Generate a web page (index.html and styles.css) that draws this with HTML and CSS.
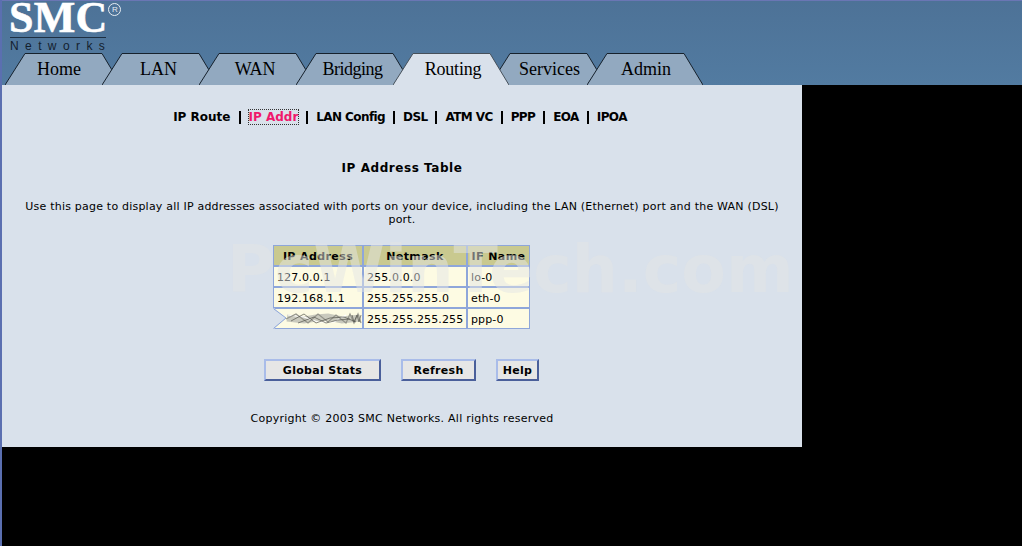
FILE: index.html
```html
<!DOCTYPE html>
<html lang="en">
<head>
<meta charset="utf-8">
<title>IP Address Table</title>
<link rel="stylesheet" href="styles.css">
</head>
<body>
<header class="header">
  <div class="logo">
    <div class="logo-top"><span class="logo-smc">SMC</span><span class="logo-reg">R</span></div>
    <div class="logo-net">Networks</div>
  </div>
  <nav class="tabs">
    <a class="tab tab-home"><svg class="tab-shape" viewBox="0 0 116 32"><polygon points="0,32 20,0.5 97,0.5 116,32"/><polyline points="0,32 20,0.5 97,0.5 116,32"/></svg><span class="tab-label">Home</span></a>
    <a class="tab tab-lan"><svg class="tab-shape" viewBox="0 0 116 32"><polygon points="0,32 20,0.5 97,0.5 116,32"/><polyline points="0,32 20,0.5 97,0.5 116,32"/></svg><span class="tab-label">LAN</span></a>
    <a class="tab tab-wan"><svg class="tab-shape" viewBox="0 0 116 32"><polygon points="0,32 20,0.5 97,0.5 116,32"/><polyline points="0,32 20,0.5 97,0.5 116,32"/></svg><span class="tab-label">WAN</span></a>
    <a class="tab tab-bridging"><svg class="tab-shape" viewBox="0 0 116 32"><polygon points="0,32 20,0.5 97,0.5 116,32"/><polyline points="0,32 20,0.5 97,0.5 116,32"/></svg><span class="tab-label">Bridging</span></a>
    <a class="tab tab-routing active"><svg class="tab-shape" viewBox="0 0 116 32"><polygon points="0,32 20,0.5 97,0.5 116,32"/><polyline points="0,32 20,0.5 97,0.5 116,32"/></svg><span class="tab-label">Routing</span></a>
    <a class="tab tab-services"><svg class="tab-shape" viewBox="0 0 116 32"><polygon points="0,32 20,0.5 97,0.5 116,32"/><polyline points="0,32 20,0.5 97,0.5 116,32"/></svg><span class="tab-label">Services</span></a>
    <a class="tab tab-admin"><svg class="tab-shape" viewBox="0 0 116 32"><polygon points="0,32 20,0.5 97,0.5 116,32"/><polyline points="0,32 20,0.5 97,0.5 116,32"/></svg><span class="tab-label">Admin</span></a>
  </nav>
</header>
<main class="panel">
  <nav class="subnav">
    <a class="sublink sublink-loose">IP Route</a><i class="sep"></i>
    <a class="sublink sublink-loose current">IP Addr</a><i class="sep"></i>
    <a class="sublink">LAN Config</a><i class="sep"></i>
    <a class="sublink">DSL</a><i class="sep"></i>
    <a class="sublink">ATM VC</a><i class="sep"></i>
    <a class="sublink">PPP</a><i class="sep"></i>
    <a class="sublink">EOA</a><i class="sep"></i>
    <a class="sublink">IPOA</a>
  </nav>
  <h1 class="title">IP Address Table</h1>
  <p class="intro">Use this page to display all IP addresses associated with ports on your device, including the LAN (Ethernet) port and the WAN (DSL) port.</p>
  <table class="iptable">
    <thead>
      <tr><th class="col-ip">IP Address</th><th class="col-mask">Netmask</th><th class="col-if">IF Name</th></tr>
    </thead>
    <tbody>
      <tr><td>127.0.0.1</td><td>255.0.0.0</td><td>lo-0</td></tr>
      <tr><td>192.168.1.1</td><td>255.255.255.0</td><td>eth-0</td></tr>
      <tr><td class="masked"><svg class="smudge" viewBox="0 0 89 19" preserveAspectRatio="none">
        <polygon class="smudge-notch" points="0,-1 12,9 0,20"/>
        <polyline class="smudge-edge" points="0,0 12,9 0,19"/>
        <g class="smudge-blur">
          <path class="smudge-b" d="M13 9 L30 11 L42 9 L54 8 L68 11 L86 9"/>
          <path class="smudge-w" d="M14 6 L30 8 L44 13 L60 13 L72 6"/>
          <path class="smudge-a" d="M12 10 L22 5 L34 14 L44 5 L54 13 L62 6 L72 14 L76 5 L80 14 L84 5 L87 14"/>
          <path class="smudge-c" d="M17 12 L30 5 L42 14 L56 9 L70 8 L82 13"/>
          <path class="smudge-c" d="M24 14 L40 8 L52 14 L64 11 L76 10"/>
          <path class="smudge-c" d="M78 6 L80 13 L83 6 L85 13 L87 6"/>
        </g>
      </svg></td><td>255.255.255.255</td><td>ppp-0</td></tr>
    </tbody>
  </table>
  <div class="actions">
    <button class="btn btn-stats">Global Stats</button>
    <button class="btn btn-refresh">Refresh</button>
    <button class="btn btn-help">Help</button>
  </div>
  <p class="copyright">Copyright © 2003 SMC Networks. All rights reserved</p>
  <div class="watermark">PcWinTech.com</div>
</main>
</body>
</html>
```

FILE: styles.css
```css
html, body {
  margin: 0;
  padding: 0;
}
body {
  background: #000;
  min-height: 546px;
  box-sizing: border-box;
  border-left: 2px solid #5b6fb0;
  font-family: "DejaVu Sans", Verdana, sans-serif;
  font-size: 11px;
  color: #000;
  overflow: hidden;
}
.header {
  box-sizing: border-box;
  height: 85px;
  border-top: 1px solid #6a76b4;
  background: linear-gradient(180deg, #4d7297 0%, #527ba1 100%);
  display: flex;
  flex-direction: column;
}
.logo {
  box-sizing: border-box;
  height: 52px;
  width: 125px;
  padding-left: 8px;
  display: flex;
  flex-direction: column;
}
.logo-top {
  display: flex;
  height: 36px;
  border-bottom: 1px solid #1d2f42;
  width: 96px;
}
.logo-smc {
  font-family: "Liberation Serif", "Times New Roman", serif;
  font-weight: bold;
  font-size: 44px;
  line-height: 36px;
  color: #fff;
  letter-spacing: 0.2px;
  -webkit-text-stroke: 0.6px #fff;
  margin-top: -1px;
  margin-left: -1px;
}
.logo-reg {
  flex: none;
  box-sizing: border-box;
  width: 13px;
  height: 13px;
  margin: 2px 0 0 1px;
  border: 1px solid #e6edf3;
  border-radius: 50%;
  color: #e6edf3;
  font-family: "Liberation Sans", Arial, sans-serif;
  font-size: 8px;
  line-height: 11px;
  text-align: center;
}
.logo-net {
  margin-top: 1px;
  font-family: "Liberation Sans", Arial, sans-serif;
  font-size: 12px;
  line-height: 14px;
  letter-spacing: 6.4px;
  color: #13202e;
  white-space: nowrap;
}
.tabs {
  display: flex;
  height: 32px;
  padding-left: 3px;
}
.tab {
  position: relative;
  flex: none;
  box-sizing: border-box;
  width: 116px;
  height: 32px;
  margin-right: -19px;
  display: flex;
  align-items: center;
  justify-content: center;
  font-family: "Liberation Serif", "Times New Roman", serif;
  font-size: 18px;
  color: #000;
}
.tab-shape {
  position: absolute;
  left: 0;
  top: 0;
  width: 116px;
  height: 32px;
  display: block;
}
.tab-shape polygon {
  fill: #92a9c0;
}
.tab-shape polyline {
  fill: none;
  stroke: #16212c;
  stroke-width: 1;
}
.tab.active {
  z-index: 2;
}
.tab.active polygon {
  fill: #d9e1eb;
}
.tab.active polyline {
  stroke: #46505a;
}
.tab-label {
  position: relative;
}
.tab-home { padding-right: 8px; }
.tab-lan { padding-right: 3px; }
.tab-wan { padding-right: 4px; letter-spacing: -0.2px; }
.tab-bridging { padding-right: 3px; letter-spacing: -0.5px; }
.tab-routing { padding-left: 4px; letter-spacing: -0.2px; }
.tab-services { padding-left: 3px; }
.tab-admin { padding-left: 2px; }

.panel {
  position: relative;
  box-sizing: border-box;
  width: 800px;
  height: 362px;
  background: #d9e1eb;
  padding-top: 25px;
  overflow: hidden;
}
.subnav {
  display: flex;
  justify-content: center;
  align-items: center;
  height: 14px;
  padding-right: 4px;
  font-weight: bold;
  font-size: 12px;
  white-space: nowrap;
}
.sublink {
  line-height: 14px;
  color: #000;
  letter-spacing: -0.6px;
}
.sublink-loose {
  letter-spacing: 0;
}
.sublink.current {
  color: #f0186c;
  outline: 1px dotted #333;
}
.sep {
  flex: none;
  width: 2px;
  height: 13px;
  margin: 0 8px;
  background: #000;
}
.title {
  margin: 37px 0 0;
  font-size: 12px;
  font-weight: bold;
  line-height: 14px;
  letter-spacing: 0.55px;
  text-align: center;
}
.intro {
  margin: 25px auto 0;
  width: 770px;
  font-size: 11px;
  line-height: 13px;
  letter-spacing: 0.21px;
  text-align: center;
}
.iptable {
  margin: 19px 0 0 271px;
  border-collapse: separate;
  border-spacing: 0;
  width: 257px;
  table-layout: fixed;
  font-size: 11px;
}
.iptable th,
.iptable td {
  box-sizing: border-box;
  height: 21px;
  padding: 2px 3px 0;
  border: 1px solid #8ea6da;
  background: #fdfbe3;
  white-space: nowrap;
  line-height: 13px;
  letter-spacing: 0.12px;
}
.iptable th {
  background: #c9c98f;
  font-weight: bold;
  letter-spacing: 0.4px;
  text-align: center;
}
.col-ip { width: 90px; }
.col-mask { width: 104px; }
.col-if { width: 63px; }
.iptable td.masked {
  padding: 0;
  border-left-color: #d9e1eb;
}
.smudge {
  display: block;
  width: 89px;
  height: 19px;
  overflow: visible;
}
.smudge-notch { fill: #d9e1eb; }
.smudge-edge { fill: none; stroke: #8ea6da; stroke-width: 1; }
.smudge-blur { filter: blur(0.35px); }
.smudge-a,
.smudge-b,
.smudge-c,
.smudge-w {
  fill: none;
}
.smudge-a { stroke: #94948a; stroke-width: 1.2; }
.smudge-b { stroke: #c9c9bd; stroke-width: 7; }
.smudge-c { stroke: #55554d; stroke-width: 0.7; }
.smudge-w { stroke: #ffffff; stroke-width: 1.2; }
.actions {
  display: flex;
  margin: 30px 0 0 262px;
  gap: 20px;
}
.btn {
  box-sizing: border-box;
  height: 22px;
  padding: 0;
  border: 2px solid;
  border-color: #a9bce9 #4a5f9a #4a5f9a #a9bce9;
  background: #e6e6e6;
  color: #000;
  font-family: "DejaVu Sans", Verdana, sans-serif;
  font-weight: bold;
  font-size: 11px;
  letter-spacing: 0.3px;
}
.btn-stats { width: 117px; }
.btn-refresh { width: 75px; }
.btn-help { width: 43px; }
.copyright {
  margin: 31px 0 0;
  text-align: center;
  font-size: 11px;
  line-height: 13px;
  letter-spacing: 0.26px;
}
.watermark {
  position: absolute;
  left: 225px;
  top: 150px;
  font-weight: bold;
  font-size: 65px;
  line-height: 70px;
  white-space: nowrap;
  color: rgba(228, 229, 230, 0.5);
  pointer-events: none;
}
```
